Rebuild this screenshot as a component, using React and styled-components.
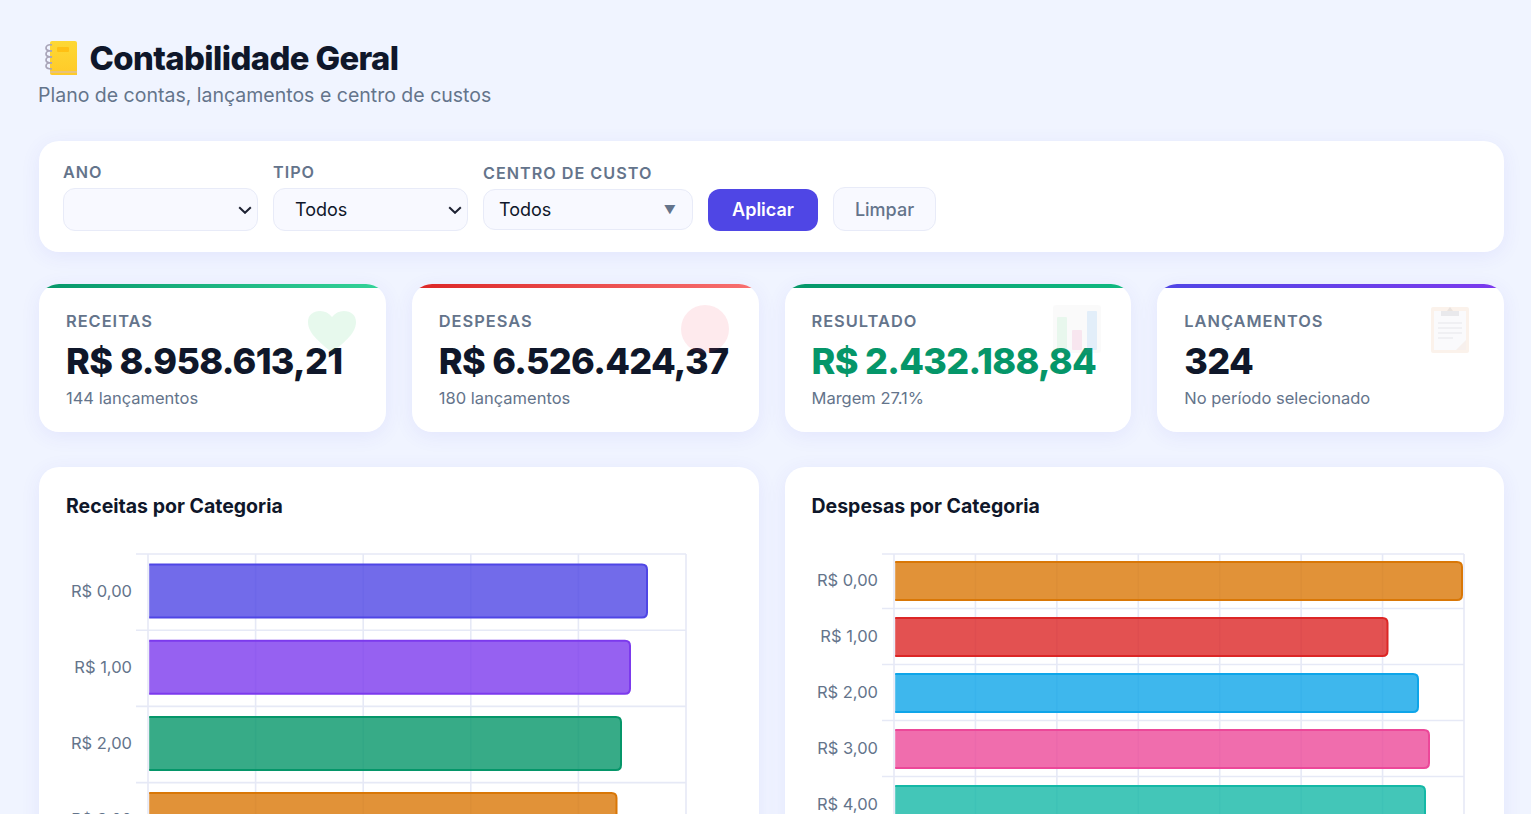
import styled, { createGlobalStyle } from "styled-components";

const GlobalStyle = createGlobalStyle`
  html, body {
    margin: 0;
    height: 814px;
    overflow: hidden;
    background: #f0f4ff;
    font-family: "Inter", "Liberation Sans", sans-serif;
    color: #0f172a;
  }
  * { box-sizing: border-box; }
`;

const Page = styled.div`
  padding: 38px 27px 0 39px;
`;

const Header = styled.header`
  margin-bottom: 34px;
`;

const Title = styled.h1`
  display: flex;
  align-items: center;
  gap: 12.5px;
  margin: 0;
  height: 40px;
  font-size: 32.8px;
  font-weight: 800;
  letter-spacing: -0.6px;
  color: #0f172a;
`;

const Subtitle = styled.p`
  margin: 5px 0 0 -1px;
  font-size: 19.5px;
  line-height: 24px;
  color: #64748b;
`;

const FilterCard = styled.section`
  display: flex;
  align-items: flex-end;
  gap: 15px;
  height: 111px;
  padding: 0 24px 21px;
  margin-bottom: 32px;
  background: #fff;
  border-radius: 20px;
  box-shadow: 0 4px 20px rgba(79, 70, 229, 0.08);
`;

const Field = styled.div`
  display: flex;
  flex-direction: column;
  gap: 6px;
  width: ${(p) => p.$width}px;
`;

const FieldLabel = styled.label`
  font-size: 16.2px;
  line-height: 19px;
  font-weight: 600;
  letter-spacing: 1px;
  text-transform: uppercase;
  color: #64748b;
`;

const NativeSelect = styled.select`
  appearance: none;
  width: 100%;
  height: 43px;
  padding: 0 21px;
  font-family: inherit;
  font-size: 18px;
  color: #0f172a;
  background-color: #f8f9ff;
  background-image: url("data:image/svg+xml,%3Csvg xmlns='http://www.w3.org/2000/svg' width='14' height='8' viewBox='0 0 14 8'%3E%3Cpath d='M1.2 1.2 7 6.8l5.8-5.6' fill='none' stroke='%231e2233' stroke-width='2'/%3E%3C/svg%3E");
  background-repeat: no-repeat;
  background-position: right 5px center;
  border: 1px solid #e8ebf8;
  border-radius: 12px;
  outline: none;
`;

const Dropdown = styled.button`
  display: flex;
  align-items: center;
  justify-content: space-between;
  width: 100%;
  height: 41px;
  margin-bottom: 1px;
  padding: 0 16px 0 15px;
  font-family: inherit;
  font-size: 18px;
  color: #0f172a;
  background: #f8f9ff;
  border: 1px solid #e8ebf8;
  border-radius: 12px;
`;

const Caret = styled.span`
  font-size: 12px;
  color: #64748b;
`;

const PrimaryButton = styled.button`
  width: 110px;
  height: 42px;
  padding-bottom: 2px;
  font-family: inherit;
  font-size: 18px;
  font-weight: 600;
  color: #fff;
  background: #4f46e5;
  border: none;
  border-radius: 12px;
`;

const GhostButton = styled.button`
  width: 103px;
  height: 44px;
  font-family: inherit;
  font-size: 18px;
  font-weight: 500;
  color: #64748b;
  background: #f8f9ff;
  border: 1px solid #e8ebf8;
  border-radius: 12px;
`;

const StatGrid = styled.section`
  display: grid;
  grid-template-columns: repeat(4, 1fr);
  gap: 26px;
  margin-bottom: 35px;
`;

const StatCard = styled.article`
  position: relative;
  height: 148px;
  padding: 27px 27px 0;
  overflow: hidden;
  background: #fff;
  border-radius: 20px;
  box-shadow: 0 4px 20px rgba(79, 70, 229, 0.08);

  &::before {
    content: "";
    position: absolute;
    top: 0;
    left: 0;
    right: 0;
    height: 4px;
    background: linear-gradient(90deg, ${(p) => p.$from}, ${(p) => p.$to});
  }
`;

const StatIcon = styled.svg`
  position: absolute;
  top: 21px;
  right: 30px;
  width: 48px;
  height: 48px;
`;

const StatLabel = styled.div`
  font-size: 16.4px;
  line-height: 20px;
  font-weight: 600;
  letter-spacing: 1px;
  text-transform: uppercase;
  color: #64748b;
`;

const StatValue = styled.div`
  margin-top: 9px;
  font-size: 36px;
  line-height: 42px;
  font-weight: 800;
  letter-spacing: -0.7px;
  white-space: nowrap;
  color: ${(p) => p.$color || "#0f172a"};
`;

const StatNote = styled.div`
  margin-top: 6px;
  font-size: 16.5px;
  line-height: 20px;
  color: #64748b;
`;

const ChartGrid = styled.section`
  display: grid;
  grid-template-columns: repeat(2, 1fr);
  gap: 26px;
`;

const ChartCard = styled.article`
  height: 500px;
  padding: 27px 27px 0;
  background: #fff;
  border-radius: 20px;
  box-shadow: 0 4px 20px rgba(79, 70, 229, 0.08);
`;

const ChartTitle = styled.h3`
  margin: 0 0 22px;
  font-size: 19.5px;
  line-height: 24px;
  font-weight: 700;
  color: #0f172a;
`;

const ChartSvg = styled.svg`
  display: block;
  overflow: visible;

  text {
    font-family: "Inter", "Liberation Sans", sans-serif;
    font-size: 16.5px;
    fill: #64748b;
  }
`;

function BarChart({ axisX, tickX, endX, cols, rowH, barH, barPad, bars, width, lineDy = 0, labelDy = -1.5 }) {
  const top = 14;
  const colW = (endX - axisX) / cols;
  const rows = bars.length + 1;
  return (
    <ChartSvg width={width} height={360} viewBox={`0 0 ${width} 360`}>
      {Array.from({ length: rows + 1 }, (_, i) => {
        const y = i === 0 ? top : top + i * rowH + lineDy;
        return <line key={i} x1={tickX} x2={endX} y1={y} y2={y} stroke="#e6e9f6" strokeWidth="1.6" />;
      })}
      {Array.from({ length: cols + 1 }, (_, i) => (
        <line key={i} x1={axisX + i * colW} x2={axisX + i * colW} y1={top} y2={360} stroke="#e6e9f6" strokeWidth="1.6" />
      ))}
      {bars.map((b, i) => {
        const y0 = top + i * rowH + barPad + 1;
        const y1 = y0 + barH - 2;
        const x0 = axisX + 1.2;
        const x1 = b.end - 1;
        const r = 5;
        const d = `M${x0} ${y0}H${x1 - r}Q${x1} ${y0} ${x1} ${y0 + r}V${y1 - r}Q${x1} ${y1} ${x1 - r} ${y1}H${x0}`;
        return (
          <g key={i}>
            <path d={d} fill={b.color} fillOpacity="0.8" />
            <path d={d} fill="none" stroke={b.color} strokeWidth="2" />
            <text x={tickX - 4} y={top + i * rowH + rowH / 2 + labelDy} textAnchor="end" dominantBaseline="central">
              {`R$ ${i},00`}
            </text>
          </g>
        );
      })}
    </ChartSvg>
  );
}

const NotebookEmoji = () => (
  <svg width="33" height="36" viewBox="0 0 33 36" style={{ marginLeft: 5, flexShrink: 0 }}>
    <defs>
      <linearGradient id="nb" x1="0" y1="0" x2="0" y2="1">
        <stop offset="0" stopColor="#fdd835" />
        <stop offset="1" stopColor="#ffca28" />
      </linearGradient>
    </defs>
    <path d="M6 3a2 2 0 0 1 2-2h23a2 2 0 0 1 2 2v32H8a2 2 0 0 1-2-2z" fill="url(#nb)" />
    <rect x="6" y="31" width="27" height="2" fill="#e8c27a" />
    <rect x="13" y="7" width="12" height="5" rx="1" fill="#ffb300" opacity="0.6" />
    {[5, 11, 17, 23].map((y) => (
      <path key={y} d={`M8 ${y}c-4-1-6 1-6 3s3 3 6 3`} fill="none" stroke="#a8a4b8" strokeWidth="1.7" />
    ))}
  </svg>
);

const incomeBars = [
  { end: 648, color: "#4f46e5" },
  { end: 631, color: "#7c3aed" },
  { end: 622, color: "#059669" },
  { end: 617.5, color: "#d97706" },
];

const expenseBars = [
  { end: 1463, color: "#d97706" },
  { end: 1388.5, color: "#dc2626" },
  { end: 1419, color: "#0ea5e9" },
  { end: 1430, color: "#ec4899" },
  { end: 1426, color: "#14b8a6" },
];

const offsetBars = (bars, dx) => bars.map((b) => ({ ...b, end: b.end - dx }));

export default function App() {
  return (
    <>
      <GlobalStyle />
      <Page>
        <Header>
          <Title>
            <NotebookEmoji />
            Contabilidade Geral
          </Title>
          <Subtitle>Plano de contas, lançamentos e centro de custos</Subtitle>
        </Header>

        <FilterCard>
          <Field $width={195}>
            <FieldLabel>Ano</FieldLabel>
            <NativeSelect defaultValue="">
              <option value=""></option>
              <option value="2024">2024</option>
            </NativeSelect>
          </Field>
          <Field $width={195}>
            <FieldLabel>Tipo</FieldLabel>
            <NativeSelect defaultValue="todos">
              <option value="todos">Todos</option>
              <option value="receita">Receita</option>
              <option value="despesa">Despesa</option>
            </NativeSelect>
          </Field>
          <Field $width={210}>
            <FieldLabel>Centro de Custo</FieldLabel>
            <Dropdown type="button">
              Todos
              <Caret>▼</Caret>
            </Dropdown>
          </Field>
          <PrimaryButton type="button">Aplicar</PrimaryButton>
          <GhostButton type="button">Limpar</GhostButton>
        </FilterCard>

        <StatGrid>
          <StatCard $from="#059669" $to="#34d399">
            <StatIcon viewBox="0 0 48 48">
              <path d="M24 48C15 39 0 30 0 17 0 10 5 6 12 6c5 0 9 2 12 6 3-4 7-6 12-6 7 0 12 4 12 11 0 13-15 22-24 31z" fill="#22c55e" opacity="0.11" />
            </StatIcon>
            <StatLabel>Receitas</StatLabel>
            <StatValue>R$ 8.958.613,21</StatValue>
            <StatNote>144 lançamentos</StatNote>
          </StatCard>

          <StatCard $from="#dc2626" $to="#f87171">
            <StatIcon viewBox="0 0 48 48">
              <circle cx="24" cy="24" r="24" fill="#f43f5e" opacity="0.11" />
            </StatIcon>
            <StatLabel>Despesas</StatLabel>
            <StatValue>R$ 6.526.424,37</StatValue>
            <StatNote>180 lançamentos</StatNote>
          </StatCard>

          <StatCard $from="#059669" $to="#10b981">
            <StatIcon viewBox="0 0 48 48">
              <rect width="48" height="48" rx="3" fill="#9e9e9e" opacity="0.05" />
              <rect x="4" y="12" width="10" height="33" rx="1" fill="#4ade80" opacity="0.1" />
              <rect x="19" y="25" width="10" height="20" rx="1" fill="#ec4899" opacity="0.11" />
              <rect x="34" y="6" width="10" height="39" rx="1" fill="#3b9cf6" opacity="0.12" />
            </StatIcon>
            <StatLabel>Resultado</StatLabel>
            <StatValue $color="#059669">R$ 2.432.188,84</StatValue>
            <StatNote>Margem 27.1%</StatNote>
          </StatCard>

          <StatCard $from="#4f46e5" $to="#7c3aed">
            <StatIcon viewBox="0 0 48 48">
              <rect x="5" y="2" width="38" height="46" rx="2" fill="#d9803a" opacity="0.1" />
              <rect x="8" y="6" width="32" height="39" fill="#fafafc" />
              <path d="M15 11V6h6l3-4 3 4h6v5z" fill="#8a8a94" opacity="0.15" />
              <path d="M12 18h24M12 23h24M12 28h24M12 33h15" stroke="#8a8a94" strokeWidth="1.2" opacity="0.16" />
              <path d="M40 35l-10 10h10z" fill="#d9803a" opacity="0.08" />
            </StatIcon>
            <StatLabel>Lançamentos</StatLabel>
            <StatValue>324</StatValue>
            <StatNote>No período selecionado</StatNote>
          </StatCard>
        </StatGrid>

        <ChartGrid>
          <ChartCard>
            <ChartTitle>Receitas por Categoria</ChartTitle>
            <BarChart
              width={665}
              axisX={82}
              tickX={70}
              endX={620}
              cols={5}
              rowH={76.2}
              barH={55}
              barPad={9.5}
              bars={offsetBars(incomeBars, 66)}
            />
          </ChartCard>
          <ChartCard>
            <ChartTitle>Despesas por Categoria</ChartTitle>
            <BarChart
              width={665}
              axisX={82}
              tickX={70}
              endX={652}
              cols={7}
              rowH={56}
              barH={40}
              barPad={7}
              lineDy={-1.5}
              labelDy={-2.5}
              bars={offsetBars(expenseBars, 812)}
            />
          </ChartCard>
        </ChartGrid>
      </Page>
    </>
  );
}
